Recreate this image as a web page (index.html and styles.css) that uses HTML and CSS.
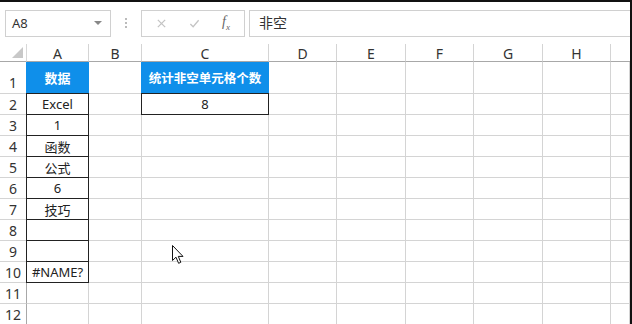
FILE: index.html
```html
<!DOCTYPE html>
<html>
<head>
	<meta charset="utf-8">
	<title>Excel</title>
	<link rel="stylesheet" href="styles.css">
</head>
<body>
	<div class="app">
		<!-- name box + formula bar -->
		<div class="formula-bar">
			<div class="name-box">
				<span>A8</span>
				<span class="drop"></span>
			</div>
			<div class="grip"><i></i><i></i><i></i></div>
			<div class="fx-box">
				<svg viewBox="0 0 12 12" class="ico"><path d="M2 2L10 10M10 2L2 10"/></svg>
				<svg viewBox="0 0 12 12" class="ico"><path d="M1.5 6.5L4.5 9.5L10.5 2.5"/></svg>
				<span class="fx"><i>f</i><sub>x</sub></span>
			</div>
			<div class="input">非空</div>
		</div>

		<!-- sheet -->
		<div class="sheet">
			<div class="corner"><span class="tri"></span></div>
			<div class="col-hd">A</div>
			<div class="col-hd">B</div>
			<div class="col-hd">C</div>
			<div class="col-hd">D</div>
			<div class="col-hd">E</div>
			<div class="col-hd">F</div>
			<div class="col-hd">G</div>
			<div class="col-hd">H</div>
			<div class="col-hd last"></div>

			<div class="row-hd bottom">1</div>
			<div class="cell fill">数据</div>
			<div class="cell"></div>
			<div class="cell fill narrow">统计非空单元格个数</div>
			<div class="cell"></div><div class="cell"></div><div class="cell"></div><div class="cell"></div><div class="cell"></div><div class="cell"></div>

			<div class="row-hd">2</div>
			<div class="cell box">Excel</div>
			<div class="cell"></div>
			<div class="cell box">8</div>
			<div class="cell"></div><div class="cell"></div><div class="cell"></div><div class="cell"></div><div class="cell"></div><div class="cell"></div>

			<div class="row-hd">3</div>
			<div class="cell box">1</div>
			<div class="cell"></div><div class="cell"></div><div class="cell"></div><div class="cell"></div><div class="cell"></div><div class="cell"></div><div class="cell"></div><div class="cell"></div>

			<div class="row-hd">4</div>
			<div class="cell box">函数</div>
			<div class="cell"></div><div class="cell"></div><div class="cell"></div><div class="cell"></div><div class="cell"></div><div class="cell"></div><div class="cell"></div><div class="cell"></div>

			<div class="row-hd">5</div>
			<div class="cell box">公式</div>
			<div class="cell"></div><div class="cell"></div><div class="cell"></div><div class="cell"></div><div class="cell"></div><div class="cell"></div><div class="cell"></div><div class="cell"></div>

			<div class="row-hd">6</div>
			<div class="cell box">6</div>
			<div class="cell"></div><div class="cell"></div><div class="cell"></div><div class="cell"></div><div class="cell"></div><div class="cell"></div><div class="cell"></div><div class="cell"></div>

			<div class="row-hd">7</div>
			<div class="cell box">技巧</div>
			<div class="cell"></div><div class="cell"></div><div class="cell"></div><div class="cell"></div><div class="cell"></div><div class="cell"></div><div class="cell"></div><div class="cell"></div>

			<div class="row-hd">8</div>
			<div class="cell box"></div>
			<div class="cell"></div><div class="cell"></div><div class="cell"></div><div class="cell"></div><div class="cell"></div><div class="cell"></div><div class="cell"></div><div class="cell"></div>

			<div class="row-hd">9</div>
			<div class="cell box"></div>
			<div class="cell"></div><div class="cell"></div><div class="cell"></div><div class="cell"></div><div class="cell"></div><div class="cell"></div><div class="cell"></div><div class="cell"></div>

			<div class="row-hd">10</div>
			<div class="cell box">#NAME?</div>
			<div class="cell"></div><div class="cell"></div><div class="cell"></div><div class="cell"></div><div class="cell"></div><div class="cell"></div><div class="cell"></div><div class="cell"></div>

			<div class="row-hd">11</div>
			<div class="cell"></div><div class="cell"></div><div class="cell"></div><div class="cell"></div><div class="cell"></div><div class="cell"></div><div class="cell"></div><div class="cell"></div><div class="cell"></div>

			<div class="row-hd">12</div>
			<div class="cell"></div><div class="cell"></div><div class="cell"></div><div class="cell"></div><div class="cell"></div><div class="cell"></div><div class="cell"></div><div class="cell"></div><div class="cell"></div>
		</div>

		<!-- mouse pointer -->
		<svg class="pointer" viewBox="0 0 13 20"><path d="M0.5 0.5L0.5 15.5L4 12.2L6.6 18.3L8.8 17.3L6.3 11.4L11 11.4Z"/></svg>
	</div>
</body>
</html>
```

FILE: styles.css
```css
* {
	margin: 0;
	padding: 0;
	box-sizing: border-box;
}
body {
	font-family: "Noto Sans", "Noto Sans CJK SC", sans-serif;
	background: white;
	color: #222;
}
.app {
	position: relative;
	width: 632px;
	height: 324px;
	overflow: hidden;
	border-top: 2px solid #111;
	border-right: 2px solid #111;
}

/* formula bar */
.formula-bar {
	display: flex;
	align-items: center;
	height: 42px;
	padding: 7px 0 7px 5px;
}
.name-box {
	display: flex;
	align-items: center;
	width: 106px;
	height: 27px;
	border: 1px solid #d0d0d0;
	padding: 0 8px 0 6px;
	font-size: 13px;
	color: #333;
}
.name-box span:first-child {
	flex: 1;
}
.drop {
	width: 0;
	height: 0;
	border-left: 4px solid transparent;
	border-right: 4px solid transparent;
	border-top: 4px solid #888;
}
.grip {
	display: flex;
	flex-direction: column;
	gap: 2px;
	width: 30px;
	align-items: center;
}
.grip i {
	display: block;
	width: 2px;
	height: 2px;
	background: #bbb;
}
.fx-box {
	display: flex;
	align-items: center;
	width: 104px;
	height: 27px;
	border: 1px solid #d0d0d0;
	padding-left: 14px;
	gap: 22px;
}
.ico {
	width: 11px;
	height: 11px;
}
.ico path {
	fill: none;
	stroke: #c4c4c4;
	stroke-width: 1.4;
}
.fx {
	font-family: "Liberation Serif", serif;
	font-size: 14px;
	color: #666;
	margin-left: 0;
}
.fx sub {
	font-size: 9px;
	font-style: italic;
}
.input {
	flex: 1;
	height: 27px;
	margin-left: 4px;
	border: 1px solid #d0d0d0;
	border-right: 0;
	padding-left: 9px;
	font-size: 14px;
	line-height: 24px;
	color: #333;
}

/* sheet */
.sheet {
	display: grid;
	grid-template-columns: 27px 62px 53px 127px 68px 69px 68px 69px 68px 1fr;
	grid-template-rows: 18px 32px repeat(11, 21px);
	font-size: 13px;
}
.corner {
	position: relative;
	border-right: 1px solid #d8d8d8;
	border-bottom: 1px solid #a8a8a8;
}
.tri {
	position: absolute;
	right: 3px;
	bottom: 3px;
	width: 0;
	height: 0;
	border-left: 11px solid transparent;
	border-bottom: 11px solid #c8c8c8;
}
.col-hd {
	display: flex;
	justify-content: center;
	align-items: center;
	border-right: 1px solid #d4d4d4;
	border-bottom: 1px solid #a8a8a8;
	font-size: 14px;
	color: #333;
	padding-top: 2px;
}
.col-hd.last {
	border-right: 0;
}
.row-hd {
	display: flex;
	justify-content: center;
	align-items: center;
	border-right: 1px solid #a8a8a8;
	border-bottom: 1px solid #d4d4d4;
	font-size: 14px;
	color: #333;
}
.row-hd.bottom {
	align-items: flex-end;
	padding-bottom: 1px;
}
.cell {
	display: flex;
	justify-content: center;
	align-items: center;
	border-right: 1px solid #d4d4d4;
	border-bottom: 1px solid #d4d4d4;
	white-space: nowrap;
}
.cell.fill {
	background: #0f8fea;
	color: white;
	font-weight: bold;
	border-color: #0f8fea;
	box-shadow: -1px 0 0 #0f8fea;
}
.cell.narrow {
	font-size: 12.5px;
}
.cell.box {
	border-right-color: #222;
	border-bottom-color: #222;
	box-shadow: -1px 0 0 #222, 0 -1px 0 #222, -1px -1px 0 #222;
}

.pointer {
	position: absolute;
	left: 172px;
	top: 243px;
	width: 13px;
	height: 20px;
}
.pointer path {
	fill: white;
	stroke: #111;
	stroke-width: 1;
	stroke-linejoin: miter;
}
```
